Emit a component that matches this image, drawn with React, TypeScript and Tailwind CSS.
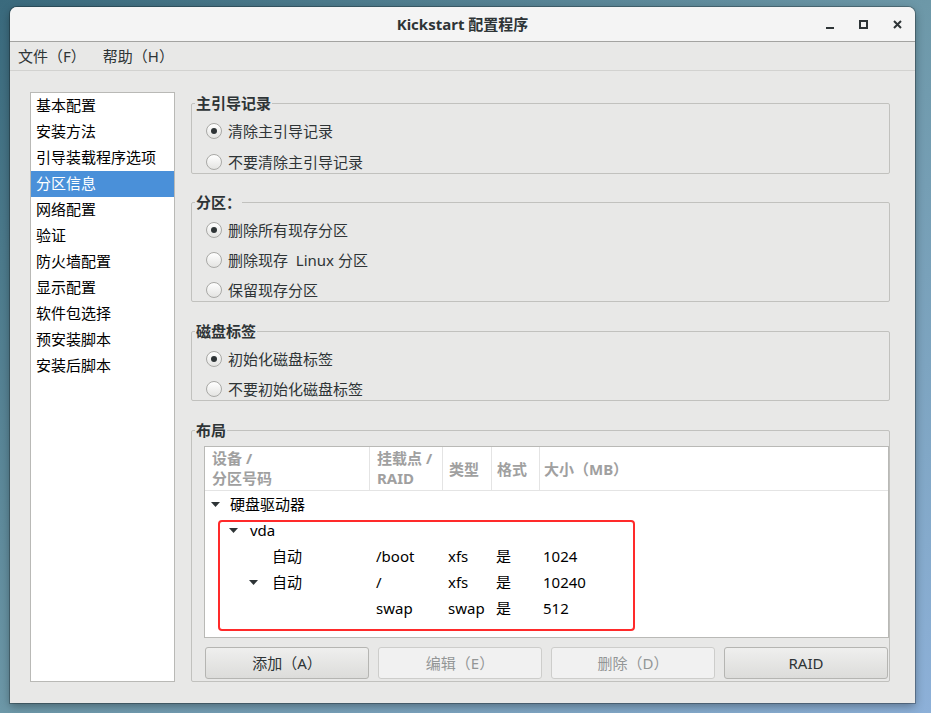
import React from "react";

const sideItems = [
    "基本配置",
    "安装方法",
    "引导装载程序选项",
    "分区信息",
    "网络配置",
    "验证",
    "防火墙配置",
    "显示配置",
    "软件包选择",
    "预安装脚本",
    "安装后脚本",
];

const rows = [
    { indent: "pl-[6px]", w: "w-[19px]", arrow: true, name: "硬盘驱动器", mount: "", type: "", fmt: "", size: "" },
    { indent: "pl-[24px]", w: "w-[21px]", arrow: true, name: "vda", mount: "", type: "", fmt: "", size: "" },
    { indent: "pl-[44px]", w: "w-[23px]", arrow: false, name: "自动", mount: "/boot", type: "xfs", fmt: "是", size: "1024" },
    { indent: "pl-[44px]", w: "w-[23px]", arrow: true, name: "自动", mount: "/", type: "xfs", fmt: "是", size: "10240" },
    { indent: "pl-[44px]", w: "w-[23px]", arrow: false, name: "", mount: "swap", type: "swap", fmt: "是", size: "512" },
];

const Radio = ({ checked, label }: { checked?: boolean; label: string }) => (
    <div className="flex items-center h-[22px] gap-[6px]">
        <span className="w-[16px] h-[16px] rounded-full border border-[#a9a9a6] bg-linear-to-b from-white to-[#e4e4e2] flex items-center justify-center">
            {checked && <span className="w-[6px] h-[6px] rounded-full bg-[#2e3436]" />}
        </span>
        <span className="whitespace-pre text-[#2e3436] leading-[22px]">{label}</span>
    </div>
);

const Frame = ({ title, className = "", children }: { title: string; className?: string; children: React.ReactNode }) => (
    <fieldset className={`border border-[#c1c1be] rounded-[2px] ${className}`}>
        <legend className="ml-[3px] px-[1px] font-bold leading-[20px] text-[#2e3436]">{title}</legend>
        {children}
    </fieldset>
);

const Arrow = () => (
    <svg width="9" height="5" viewBox="0 0 9 5" className="fill-[#2e3436]">
        <path d="M0 0h9L4.5 5z" />
    </svg>
);

const cols = "grid grid-cols-[164px_73px_49px_48px_1fr]";

const App = () => {
    return (
        <div className="w-[931px] h-[713px] overflow-hidden bg-linear-to-br from-[#3a6a7d] via-[#6d98a8] to-[#8db0d8] pl-[10px] pt-[7px] text-[15px] [font-family:'Noto_Sans','Noto_Sans_CJK_SC',sans-serif]">
            <div className="w-[905px] h-[696px] flex flex-col bg-[#e8e8e7] rounded-t-[7px] overflow-hidden shadow-[0_0_0_1px_rgba(0,0,0,0.25),0_3px_10px_rgba(0,0,0,0.35)]">
                {/* title bar */}
                <div className="h-[35px] shrink-0 relative flex items-center justify-center bg-[#f4f4f4] border-b border-[#a3a3a1]">
                    <span className="font-bold text-[#2e3436]">Kickstart 配置程序</span>
                    <div className="absolute right-[9px] top-[13px] flex items-center gap-[18px]">
                        <svg width="16" height="10" viewBox="0 0 16 10" className="text-[#2e3436]">
                            <rect x="4" y="7" width="8" height="2" fill="currentColor" />
                        </svg>
                        <svg width="16" height="10" viewBox="0 0 16 10" className="text-[#2e3436]">
                            <rect x="4" y="1" width="7" height="7" fill="none" stroke="currentColor" strokeWidth="2" />
                        </svg>
                        <svg width="16" height="10" viewBox="0 0 16 10" className="text-[#2e3436]">
                            <path d="M4 1l7 7M11 1l-7 7" stroke="currentColor" strokeWidth="2" />
                        </svg>
                    </div>
                </div>

                {/* menu */}
                <div className="h-[29px] shrink-0 flex items-center gap-[17px] pl-[8px] border-b border-[#d2d2d0] text-[#2e3436]">
                    <span>文件（F）</span>
                    <span>帮助（H）</span>
                </div>

                {/* body */}
                <div className="flex-1 min-h-0 flex gap-[16px] pt-[21px] pb-[21px] pl-[20px] pr-[25px]">
                    <div className="w-[145px] shrink-0 bg-white border border-[#b9b9b6] text-black">
                        {sideItems.map(item => (
                            <div
                                key={item}
                                className={`h-[26px] leading-[25px] pl-[5px] ${item === "分区信息" ? "bg-[#4a90d9] text-white" : ""}`}
                            >
                                {item}
                            </div>
                        ))}
                    </div>

                    <div className="flex-1 min-w-0 flex flex-col pt-[1px]">
                        <Frame title="主引导记录">
                            <div className="flex flex-col pt-[7px] gap-[9px] pl-[14px]">
                                <Radio checked label="清除主引导记录" />
                                <Radio label="不要清除主引导记录" />
                            </div>
                        </Frame>

                        <Frame title="分区：" className="mt-[18px]">
                            <div className="flex flex-col pt-[7px] gap-[8px] pl-[14px]">
                                <Radio checked label="删除所有现存分区" />
                                <Radio label="删除现存  Linux 分区" />
                                <Radio label="保留现存分区" />
                            </div>
                        </Frame>

                        <Frame title="磁盘标签" className="mt-[19px]">
                            <div className="flex flex-col pt-[7px] gap-[8px] pl-[14px]">
                                <Radio checked label="初始化磁盘标签" />
                                <Radio label="不要初始化磁盘标签" />
                            </div>
                        </Frame>

                        <Frame title="布局" className="mt-[19px] flex-1 min-h-0 flex flex-col">
                            <div className="relative flex-1 mt-[6px] ml-[12px] bg-white border border-[#b9b9b6]">
                                <div className={`${cols} h-[44px] border-b border-[#e4e4e4] font-bold text-[#a0a0a0] leading-[20px]`}>
                                    <div className="px-[7px] py-[1px]">
                                        设备 /<br />分区号码
                                    </div>
                                    <div className="px-[7px] py-[1px] border-l border-[#e4e4e4]">
                                        挂载点 /<br />RAID
                                    </div>
                                    <div className="px-[6px] flex items-center border-l border-[#e4e4e4]">类型</div>
                                    <div className="px-[5px] flex items-center border-l border-[#e4e4e4]">格式</div>
                                    <div className="px-[4px] flex items-center border-l border-[#e4e4e4]">大小（MB）</div>
                                </div>
                                {rows.map((r, i) => (
                                    <div key={i} className={`${cols} h-[26px] items-center text-black`}>
                                        <div className={`flex items-center ${r.indent}`}>
                                            <span className={`${r.w} flex items-center`}>{r.arrow && <Arrow />}</span>
                                            <span>{r.name}</span>
                                        </div>
                                        <div className="px-[7px]">{r.mount}</div>
                                        <div className="px-[6px]">{r.type}</div>
                                        <div className="px-[5px]">{r.fmt}</div>
                                        <div className="px-[4px]">{r.size}</div>
                                    </div>
                                ))}
                                <div className="absolute left-[13px] top-[73px] w-[417px] h-[111px] rounded-[4px] border-2 border-[#ff2a2a] pointer-events-none" />
                            </div>

                            <div className="grid grid-cols-4 gap-[9px] h-[32px] mt-[9px] ml-[13px] mr-[1px] mb-[2px]">
                                <button className="rounded-[3px] border border-[#b5b5b2] bg-linear-to-b from-[#efefee] to-[#dcdcda] text-[#2e3436]">添加（A）</button>
                                <button className="rounded-[3px] border border-[#cdcdcb] bg-[#f1f1f1] text-[#939696]">编辑（E）</button>
                                <button className="rounded-[3px] border border-[#cdcdcb] bg-[#f1f1f1] text-[#939696]">删除（D）</button>
                                <button className="rounded-[3px] border border-[#b5b5b2] bg-linear-to-b from-[#efefee] to-[#dcdcda] text-[#2e3436]">RAID</button>
                            </div>
                        </Frame>
                    </div>
                </div>
            </div>
        </div>
    );
};

export default App;
